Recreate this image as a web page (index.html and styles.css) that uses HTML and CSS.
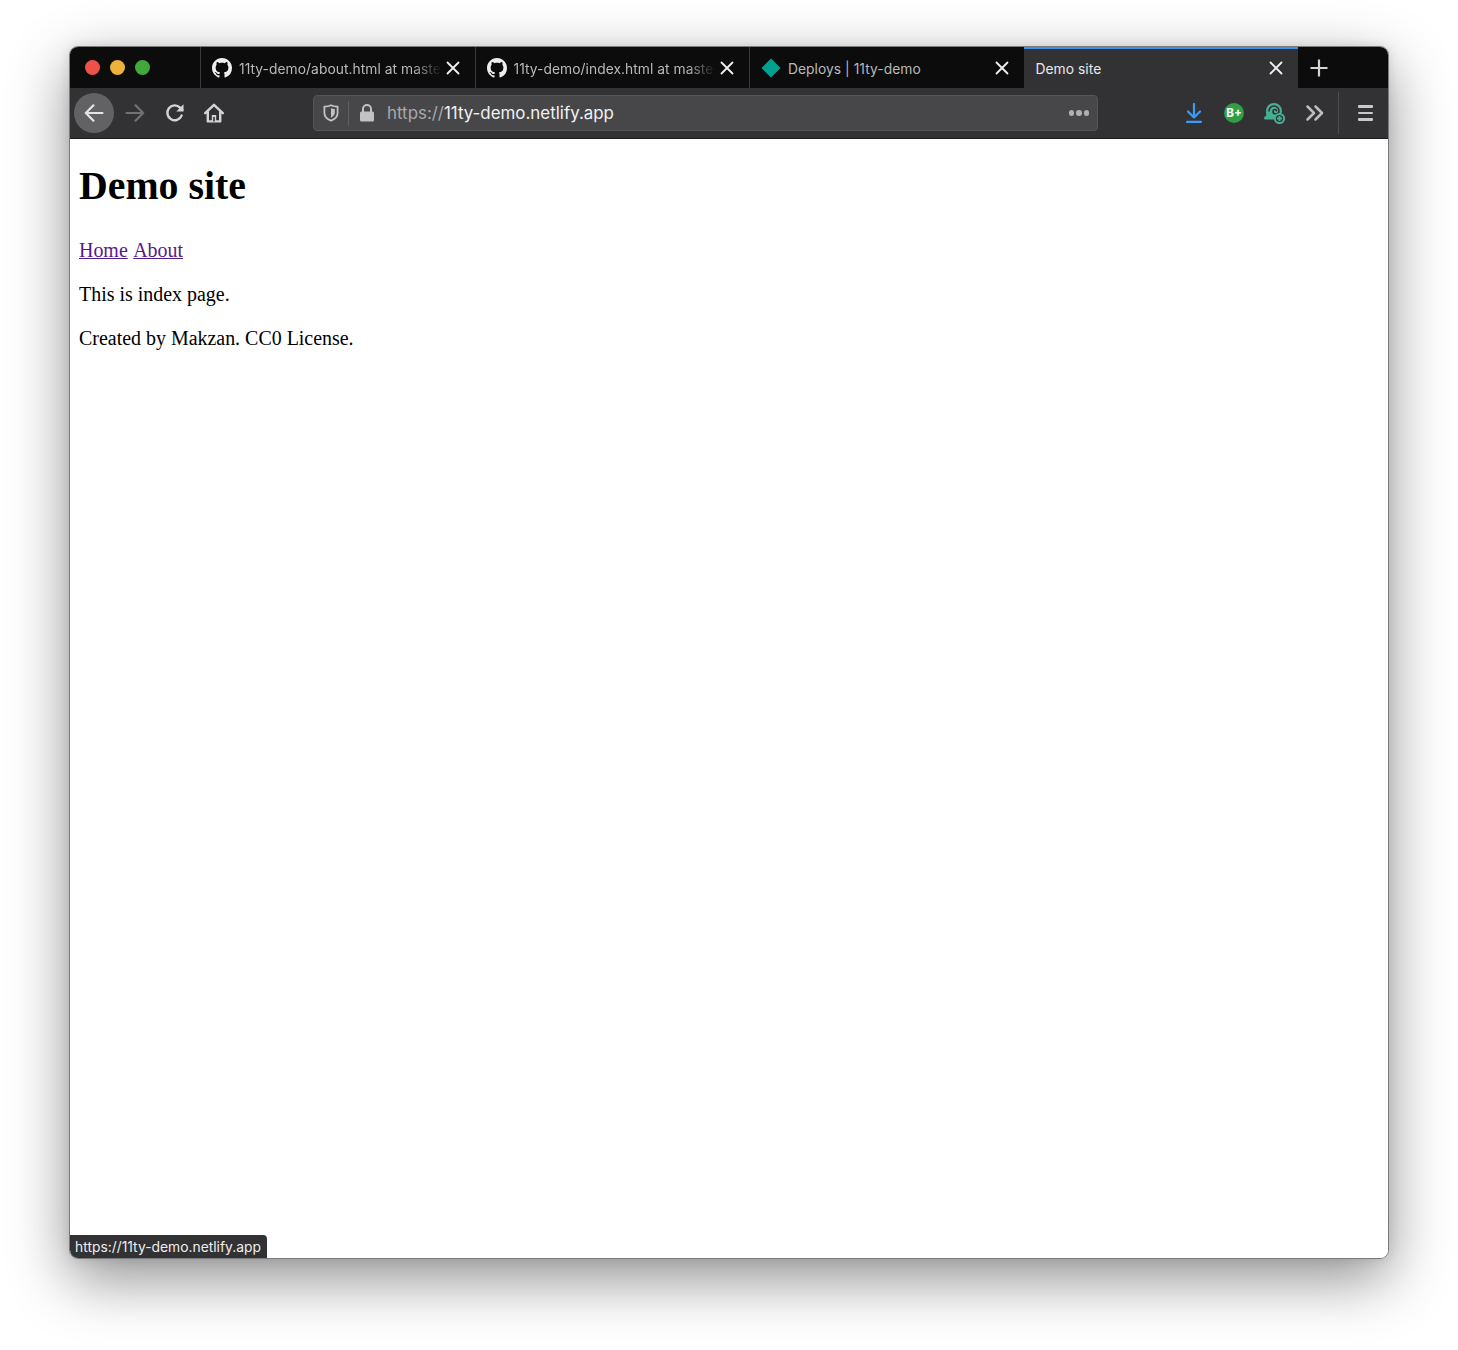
FILE: index.html
```html
<!DOCTYPE html>
<html lang="en">
<head>
<meta charset="utf-8">
<title>Demo site</title>
<link rel="stylesheet" href="styles.css">
</head>
<body>
<svg class="defs" width="0" height="0" aria-hidden="true">
  <symbol id="gh" viewBox="0 0 16 16"><path fill="currentColor" d="M8 0C3.58 0 0 3.58 0 8c0 3.54 2.29 6.53 5.47 7.59.4.07.55-.17.55-.38 0-.19-.01-.82-.01-1.49-2.01.37-2.53-.49-2.69-.94-.09-.23-.48-.94-.82-1.13-.28-.15-.68-.52-.01-.53.63-.01 1.08.58 1.23.82.72 1.21 1.87.87 2.33.66.07-.52.28-.87.51-1.07-1.78-.2-3.64-.89-3.64-3.95 0-.87.31-1.59.82-2.15-.08-.2-.36-1.02.08-2.12 0 0 .67-.21 2.2.82.64-.18 1.32-.27 2-.27s1.36.09 2 .27c1.53-1.04 2.2-.82 2.2-.82.44 1.1.16 1.92.08 2.12.51.56.82 1.27.82 2.15 0 3.07-1.87 3.75-3.65 3.95.29.25.54.73.54 1.48 0 1.07-.01 1.93-.01 2.2 0 .21.15.46.55.38A8.01 8.01 0 0 0 16 8c0-4.42-3.58-8-8-8z"/></symbol>
  <symbol id="x" viewBox="0 0 14 14"><path fill="none" stroke="currentColor" stroke-width="1.8" stroke-linecap="round" d="M1.5 1.5l11 11M12.5 1.5l-11 11"/></symbol>
</svg>
<div class="window">
  <header class="tabbar">
    <div class="lights">
      <span class="light red"></span>
      <span class="light yellow"></span>
      <span class="light green"></span>
    </div>
    <div class="tab">
      <svg class="favicon"><use href="#gh"/></svg>
      <span class="tab-title fade">11ty-demo/about.html at maste</span>
      <svg class="close"><use href="#x"/></svg>
    </div>
    <div class="tab">
      <svg class="favicon"><use href="#gh"/></svg>
      <span class="tab-title fade">11ty-demo/index.html at maste</span>
      <svg class="close"><use href="#x"/></svg>
    </div>
    <div class="tab">
      <svg class="favicon" viewBox="0 0 20 20"><path fill="#00a28f" d="M10 0.500l9.500 9.500-9.500 9.500L0.500 10z"/></svg>
      <span class="tab-title">Deploys | 11ty-demo</span>
      <svg class="close"><use href="#x"/></svg>
    </div>
    <div class="tab active">
      <span class="tab-title">Demo site</span>
      <svg class="close"><use href="#x"/></svg>
    </div>
    <svg class="newtab" viewBox="0 0 18 18"><path fill="none" stroke="#d4d4d5" stroke-width="2.200" d="M9 0.500v17M0.500 9h17"/></svg>
  </header>
  <nav class="toolbar">
    <div class="navbtns">
      <span class="btn back">
        <svg viewBox="0 0 20 20" class="ico20"><path fill="none" stroke="#e4e4e5" stroke-width="2.200" stroke-linecap="round" stroke-linejoin="round" d="M18.500 10H1.800M9.500 2.300L1.800 10l7.700 7.700"/></svg>
      </span>
      <span class="btn">
        <svg viewBox="0 0 20 20" class="ico20 shift1"><path fill="none" stroke="#717173" stroke-width="2.200" stroke-linecap="round" stroke-linejoin="round" d="M1.500 10h16.700M10.500 2.300l7.700 7.700-7.700 7.700"/></svg>
      </span>
      <span class="btn">
        <svg viewBox="0 0 20 20" class="ico20 shift1"><path fill="none" stroke="#d4d4d5" stroke-width="2.400" stroke-linecap="round" d="M16.600 12.600A7.400 7.400 0 1 1 15 4.600L17.400 7"/><path fill="#d4d4d5" d="M18.500 1.200v7.200h-7.200z"/></svg>
      </span>
      <span class="btn">
        <svg viewBox="0 0 20 20" class="ico20"><path fill="none" stroke="#d4d4d5" stroke-width="2.400" stroke-linejoin="round" stroke-linecap="round" d="M1.200 10.200L10 1.800l8.800 8.400M3.800 8.400v10h12.400v-10"/><path fill="#d4d4d5" d="M7.800 12h4.400v6.400H7.800z"/><path fill="#323234" d="M9.200 14h1.600v4.400H9.200z"/></svg>
      </span>
    </div>
    <div class="urlbar">
      <svg class="shield" viewBox="0 0 16 18"><path fill="none" stroke="#c2c2c3" stroke-width="1.800" stroke-linejoin="round" d="M8 1.200c2 1 4 1.400 6.600 1.500v6c0 3.600-2.600 6.400-6.600 8-4-1.600-6.600-4.400-6.600-8v-6C4 2.600 6 2.200 8 1.200z"/><path fill="#c2c2c3" d="M8 4.200c1.200.5 2.400.8 3.800.9v3.700c0 2.100-1.500 3.800-3.800 5z"/></svg>
      <span class="urlsep"></span>
      <svg class="lock" viewBox="0 0 16 18"><path fill="#c2c2c3" d="M2.500 7.500h11a1.500 1.500 0 0 1 1.500 1.500v7a1.500 1.500 0 0 1-1.500 1.500h-11A1.500 1.500 0 0 1 1 16V9a1.500 1.500 0 0 1 1.500-1.500z"/><path fill="none" stroke="#c2c2c3" stroke-width="2" d="M4 8V5a4 4 0 0 1 8 0v3"/></svg>
      <span class="url"><span class="scheme">https://</span>11ty-demo.netlify.app</span>
      <span class="dots"><i></i><i></i><i></i></span>
    </div>
    <div class="actions">
      <svg class="ico-dl" viewBox="0 0 16 20"><path fill="none" stroke="#3c9af8" stroke-width="2.200" stroke-linecap="round" stroke-linejoin="round" d="M8 1v13M2 8.500l6 6 6-6"/><path fill="none" stroke="#3c9af8" stroke-width="2.200" stroke-linecap="round" d="M1 18.800h14"/></svg>
      <span class="bplus">B+</span>
      <svg class="ico-snail" viewBox="0 0 22 22"><path fill="#46ae94" d="M1 17c0-2 1-3 2.500-3.500C3 12.500 3 11 3 9a8 8 0 0 1 16 0c0 1.500-.5 2.500-1 3.200a5.500 5.500 0 0 0-6.800 5.300H3c-1 0-2-.5-2-.5z"/><path fill="none" stroke="#323234" stroke-width="1.600" stroke-linecap="round" d="M6 9a5 5 0 0 1 10 0c0 1.500-1 3-3 3s-3-1-3-2.500 1-2 2-2 1.500.7 1.500 1.300"/><circle cx="16.500" cy="16.500" r="4.600" fill="#323234" stroke="#46ae94" stroke-width="2"/><path stroke="#46ae94" stroke-width="2" d="M16.500 14v5M14 16.500h5"/></svg>
      <svg class="ico-more" viewBox="0 0 18 16"><path fill="none" stroke="#bdbdbe" stroke-width="2.500" stroke-linecap="round" stroke-linejoin="round" d="M1.500 1.500L8 8l-6.500 6.500M9.500 1.500L16 8l-6.500 6.500"/></svg>
      <span class="toolsep"></span>
      <span class="burger"><i></i><i></i><i></i></span>
    </div>
  </nav>
  <main class="content">
    <h1>Demo site</h1>
    <p><a href="#home">Home</a> <a class="second" href="#about">About</a></p>
    <p>This is index page.</p>
    <p>Created by Makzan. CC0 License.</p>
    <div class="status">https://11ty-demo.netlify.app</div>
  </main>
</div>
</body>
</html>
```

FILE: styles.css
```css
* { box-sizing: border-box; }
html, body { margin: 0; height: 100%; background: #fff; }
body { padding: 46px 69px 91px; overflow: hidden; font-family: "Inter", "Liberation Sans", sans-serif; }
.defs { position: absolute; }

.window {
  display: flex;
  flex-direction: column;
  width: 1320px;
  height: 1213px;
  border: 1.5px solid #7b7b7d;
  border-radius: 9px;
  overflow: hidden;
  background: #fff;
  box-shadow: 0 20px 60px rgba(0, 0, 0, .44), 0 0 12px rgba(0, 0, 0, .10);
}

.tabbar {
  display: flex;
  flex: none;
  height: 41px;
  padding-left: 130px;
  background: #0c0c0d;
  position: relative;
  align-items: stretch;
}
.lights { position: absolute; left: 14.500px; top: 13px; display: flex; gap: 10px; }
.light { width: 15px; height: 15px; border-radius: 50%; }
.red { background: #ee5148; }
.yellow { background: #ecb23a; }
.green { background: #41a93b; }

.tab {
  display: flex;
  align-items: center;
  width: 274.500px;
  padding: 0 15px 0 11px;
  border-left: 1px solid #3a3a3c;
  color: #b9b9ba;
  font-size: 13.800px;
  letter-spacing: .05px;
}
.tab.active {
  background: #323234;
  color: #e8e8e9;
  border-left: 0;
  box-shadow: inset 0 2px 0 #3f8fe8;
  padding-left: 12px;
}
.favicon { width: 20px; height: 20px; color: #eeeeef; flex: none; margin-right: 7px; }
.tab-title { flex: 1; white-space: nowrap; padding-top: 2px; }
.fade {
  -webkit-mask-image: linear-gradient(to right, #000 84%, transparent 98%);
  mask-image: linear-gradient(to right, #000 84%, transparent 98%);
}
.close { width: 14px; height: 14px; color: #f0f0f1; flex: none; }
.newtab { width: 18px; height: 18px; align-self: center; margin-left: 12px; }

.toolbar {
  display: flex;
  flex: none;
  align-items: center;
  height: 51px;
  padding: 0 0 0 4px;
  background: #323234;
  border-bottom: 1px solid #1c1c1d;
}
.navbtns { display: flex; align-items: center; gap: 0; width: 239px; flex: none; }
.btn { width: 40px; height: 40px; display: flex; align-items: center; justify-content: center; border-radius: 50%; flex: none; }
.btn.back { background: #626264; }
.ico20 { width: 20px; height: 20px; }
.shift1 { margin-left: 2px; }

.urlbar {
  display: flex;
  align-items: center;
  width: 785px;
  height: 36px;
  flex: none;
  padding: 0 8px 0 9px;
  background: #474749;
  border: 1px solid #555557;
  border-radius: 4px;
}
.shield { width: 16px; height: 18px; flex: none; }
.urlsep { width: 1px; height: 25px; background: #5e5e60; margin: 0 10px 0 9px; flex: none; }
.lock { width: 16px; height: 18px; flex: none; margin-right: 12px; }
.url { flex: 1; font-size: 16.900px; color: #f1f1f2; white-space: nowrap; }
.scheme { color: #a9a9aa; }
.dots { display: flex; gap: 2px; }
.dots i { width: 5.500px; height: 5.500px; border-radius: 50%; background: #b0b0b1; }

.actions { display: flex; align-items: center; flex: 1; padding-left: 88px; }
.ico-dl { width: 16px; height: 20px; flex: none; }
.bplus {
  width: 20px; height: 20px; margin-left: 22px; flex: none;
  display: flex; align-items: center; justify-content: center;
  border-radius: 50%;
  background: #2ea043;
  color: #f2f2f2;
  font-size: 11.500px;
  font-weight: 800;
}
.ico-snail { width: 22px; height: 22px; margin-left: 19px; flex: none; }
.ico-more { width: 18px; height: 16px; margin-left: 21px; flex: none; }
.toolsep { width: 1px; height: 42px; background: #4d4d4f; margin-left: 14px; flex: none; }
.burger { display: flex; flex-direction: column; gap: 4.200px; width: 15px; margin-left: 19px; flex: none; }
.burger i { height: 2.300px; background: #c9c9ca; border-radius: 1px; }

.content {
  position: relative;
  flex: 1;
  padding: 1px 9px 0;
  background: #fff;
  color: #000;
  font-family: "Liberation Serif", "Times New Roman", serif;
  font-size: 19.950px;
}
h1 { margin: 23px 0 29px; font-size: 39.800px; line-height: 46px; }
p { margin: 0 0 20px; line-height: 24px; }
a { color: #551a8b; }
.second { margin-left: .5px; }
.status {
  position: absolute;
  left: 0;
  bottom: 0;
  height: 23px;
  padding: 0 6px 0 5px;
  display: flex;
  align-items: center;
  background: #323234;
  color: #eeeeef;
  border-radius: 0 4px 0 0;
  font-family: "Inter", "Liberation Sans", sans-serif;
  font-size: 13.850px;
}
```
